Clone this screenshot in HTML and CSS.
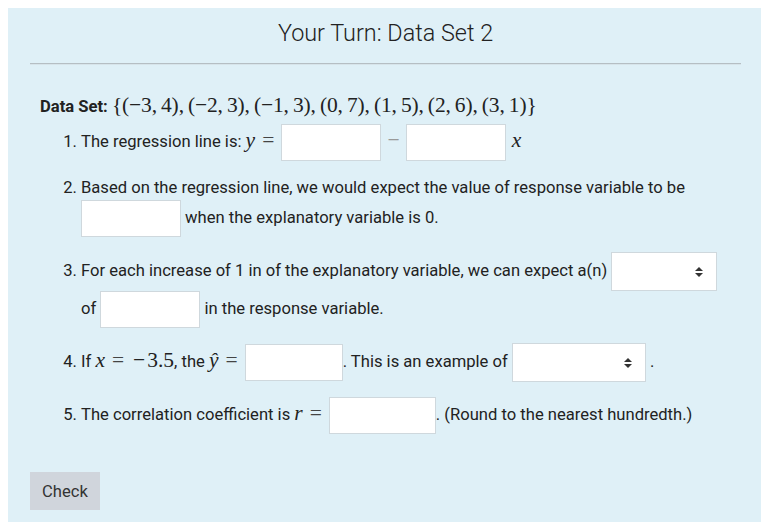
FILE: index.html
```html
<!DOCTYPE html>
<html>
<head>
<meta charset="utf-8">
<link rel="stylesheet" href="styles.css">
</head>
<body>
<div class="panel">
  <h2 class="title">Your Turn: Data Set 2</h2>
  <hr class="rule">
  <div class="content">
    <p class="dataset"><b>Data Set:</b> <span class="math set">{(−3,&#8201;4),&#8201;(−2,&#8201;3),&#8201;(−1,&#8201;3),&#8201;(0,&#8201;7),&#8201;(1,&#8201;5),&#8201;(2,&#8201;6),&#8201;(3,&#8201;1)}</span></p>
    <ol class="items">
      <li>The regression line is: <span class="math"><i>y</i><span class="rel">=</span></span><input class="blank" type="text"> <span class="math bin">−</span> <input class="blank" type="text"> <span class="math"><i class="var-x">x</i></span></li>
      <li>Based on the regression line, we would expect the value of response variable to be <input class="blank" type="text"> when the explanatory variable is 0.</li>
      <li>For each increase of 1 in of the explanatory variable, we can expect a(n) <span class="select sel-sm"><select><option></option></select><svg class="arrows" width="8" height="10" viewBox="0 0 8 10"><path d="M0 4 L4 0 L8 4 Z M0 6 L8 6 L4 10 Z" fill="#333"/></svg></span> of <input class="blank" type="text"> in the response variable.</li>
      <li>If <span class="math"><i>x</i><span class="rel">=</span><span class="neg">−</span>3.5</span>, the <span class="math"><i>ŷ</i><span class="rel">=</span></span><input class="blank narrow" type="text">. This is an example of <span class="select sel-lg"><select><option></option></select><svg class="arrows" width="8" height="10" viewBox="0 0 8 10"><path d="M0 4 L4 0 L8 4 Z M0 6 L8 6 L4 10 Z" fill="#333"/></svg></span> .</li>
      <li>The correlation coefficient is <span class="math"><i>r</i><span class="rel">=</span></span><input class="blank wide" type="text">. (Round to the nearest hundredth.)</li>
    </ol>
  </div>
  <button class="check" type="button">Check</button>
</div>
</body>
</html>
```
FILE: styles.css
```css
html, body {
  overflow: hidden;
}
body {
  margin: 8px 0 0 8px;
  background: #ffffff;
  font-family: Roboto, "Noto Sans", sans-serif;
  color: #222;
}
.panel {
  background: #dff0f7;
  padding: 12px 20px 12px 22px;
  height: 514px;
  box-sizing: border-box;
}
.title {
  margin: 0;
  text-align: center;
  font-size: 23.4px;
  font-weight: 300;
  line-height: 26px;
  color: #222;
}
.rule {
  margin: 17px 0 0 0;
  border: 0;
  border-top: 1px solid #b5bec3;
  border-bottom: 1px solid #d7e4ea;
}
.content {
  padding: 0 10px;
}
.dataset {
  margin: 27px 0 0 0;
  font-size: 16.6px;
  line-height: 26px;
}
.dataset b {
  font-weight: 700;
}
.math {
  font-family: "Liberation Serif", "DejaVu Serif", serif;
  font-size: 21.5px;
}
.set {
  letter-spacing: -0.15px;
}
.math i {
  font-style: italic;
}
.rel {
  display: inline-block;
  margin: 0 7px;
  color: #444;
}
.neg {
  padding: 0 2px;
}
.bin {
  display: inline-block;
  margin: 0 2px;
  color: #999;
}
.var-x {
  margin-left: 2px;
}
.items {
  margin: 4px 0 0 0;
  padding: 0 0 0 41px;
  font-size: 16.6px;
  line-height: 24px;
}
.items li {
  margin-bottom: 15px;
  padding-left: 0;
}
.blank {
  display: inline-block;
  vertical-align: middle;
  width: 100px;
  height: 37px;
  box-sizing: border-box;
  margin: 0;
  padding: 0 6px;
  border: 1px solid #cfd8dd;
  border-radius: 0;
  background: #fff;
  font: inherit;
}
.blank.narrow {
  width: 98px;
}
.blank.wide {
  width: 107px;
}
.select {
  position: relative;
  display: inline-block;
  vertical-align: middle;
  height: 39px;
}
.select select {
  appearance: none;
  -webkit-appearance: none;
  width: 100%;
  height: 39px;
  box-sizing: border-box;
  margin: 0;
  border: 1px solid #cfd8dd;
  border-radius: 0;
  background: #fff;
  font: inherit;
  display: block;
}
.sel-sm {
  width: 106px;
}
.sel-lg {
  width: 134px;
}
.arrows {
  position: absolute;
  right: 14px;
  top: 15px;
}
.check {
  margin-top: 23px;
  height: 38px;
  padding: 0 12px;
  border: 0;
  border-radius: 0;
  background: #d0d5dc;
  color: #333;
  font-family: Roboto, "Noto Sans", sans-serif;
  font-size: 16.6px;
}
```
